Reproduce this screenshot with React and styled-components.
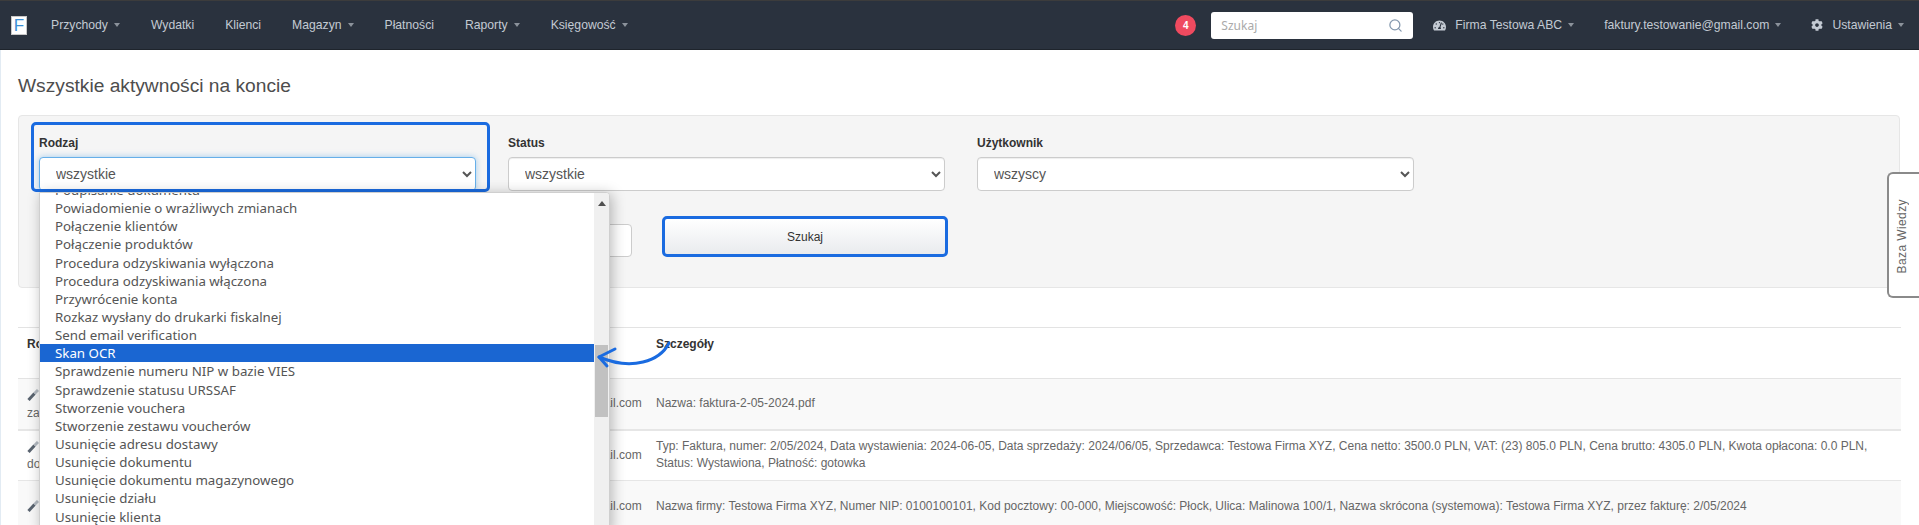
import React from 'react';
import styled, { createGlobalStyle } from 'styled-components';
import { FaCog, FaTachometerAlt } from 'react-icons/fa';
import { Search } from 'lucide-react';

const GlobalStyle = createGlobalStyle`
html, body {
  margin: 0;
  height: 525px;
  overflow: hidden;
  background: #fff;
  font-family: "Liberation Sans", Arial, sans-serif;
  font-size: 12px;
  color: #666;
}
* { box-sizing: border-box; }
`
const Page = styled.div`
position: relative;
height: 525px;
overflow: hidden;
`
const Navbar = styled.nav`
display: flex;
align-items: center;
height: 50px;
padding: 0 15px 0 11px;
background: #2a323e;
border-top: 1px solid #3c3c3c;
border-bottom: 1px solid #1e242c;
`
const Logo = styled.div`
width: 16px;
height: 19px;
margin-right: 24px;
background: #fff;
border: 1px solid #c9c9c9;
color: #3b8fd6;
font-size: 17px;
line-height: 17px;
text-align: center;
`
const NavList = styled.div`
display: flex;
align-items: center;
gap: ${p => p.$gap}px;
`
const NavItem = styled.div`
display: flex;
align-items: center;
gap: 6px;
font-size: 12.2px;
color: #c3cad3;
white-space: nowrap;
svg { margin-right: 3px; }
`
const Caret = styled.span`
width: 0;
height: 0;
border-left: 3.5px solid transparent;
border-right: 3.5px solid transparent;
border-top: 4px solid #8b929b;
`
const NavRight = styled.div`
display: flex;
align-items: center;
margin-left: auto;
`
const Badge = styled.div`
width: 21px;
height: 21px;
margin-right: 15px;
border-radius: 50%;
background: #ef4a5f;
color: #fff;
font-size: 10px;
font-weight: bold;
line-height: 21px;
text-align: center;
`
const SearchBox = styled.div`
display: flex;
align-items: center;
width: 202px;
height: 27px;
margin-right: 20px;
padding: 0 10px;
background: #fff;
border-radius: 3px;
color: #8397ad;
`
const SearchInput = styled.input`
flex: 1;
min-width: 0;
padding: 0;
border: 0;
outline: 0;
background: none;
font-family: "Noto Sans", sans-serif;
font-size: 12px;
&::placeholder { color: #aaa; }
`
const Content = styled.main`
height: 475px;
padding: 25px 19px 0 17px;
border-left: 1px solid #e2ebf3;
`
const Title = styled.h1`
margin: 0 0 18px;
font-size: 19.2px;
font-weight: normal;
line-height: 22px;
color: #4d4d4d;
`
const FilterPanel = styled.section`
height: 173px;
padding: 19px 20px 30px;
background: #f5f5f5;
border: 1px solid #e6e6e6;
border-radius: 4px;
`
const FilterRow = styled.div`
display: grid;
grid-template-columns: 437px 437px 437px;
gap: 32px;
`
const Field = styled.div`
position: relative;
`
const Label = styled.label`
display: block;
margin-bottom: 5px;
font-size: 12px;
font-weight: bold;
line-height: 17px;
color: #333;
`
const Select = styled.select`
display: block;
width: 100%;
height: 34px;
padding: 6px 12px;
background-color: #fff;
border: 1px solid ${p => (p.$focused ? '#66afe9' : '#ccc')};
border-radius: 4px;
box-shadow: ${p => (p.$focused ? '0 0 6px rgba(102, 175, 233, .6)' : 'inset 0 1px 1px rgba(0, 0, 0, .07)')};
font-family: "Liberation Sans", sans-serif;
font-size: 14px;
color: #555;
`
const Highlight = styled.div`
position: absolute;
top: -13px;
left: -8px;
width: 459px;
height: 70px;
border: 3px solid #1a6be0;
border-radius: 5px;
`
const SearchRow = styled.div`
display: flex;
align-items: flex-end;
gap: 30px;
margin-top: 25px;
`
const DateInput = styled.div`
width: 593px;
height: 33px;
background: #fff;
border: 1px solid #ccc;
border-radius: 4px;
`
const SearchButton = styled.button`
width: 286px;
height: 41px;
background: linear-gradient(#fff, #e9ebee);
border: 3px solid #1a6be0;
border-radius: 5px;
font-family: "Liberation Sans", sans-serif;
font-size: 12px;
color: #333;
`
const Table = styled.table`
width: 1883px;
margin-top: 39px;
border-collapse: collapse;
table-layout: fixed;
`
const HeadCell = styled.th`
height: 51px;
padding: 8px 8px 0 9px;
border-top: 1px solid #e3e3e3;
border-bottom: 1px solid #e3e3e3;
vertical-align: top;
text-align: left;
font-size: 12px;
line-height: 17px;
color: #333;
`
const Row = styled.tr`
background: ${p => (p.$striped ? '#f9f9f9' : '#fff')};
`
const Cell = styled.td`
height: 51px;
padding: 0 8px 0 9px;
border-bottom: ${p => p.$thick ? 2 : 1}px solid #e6e6e6;
vertical-align: middle;
text-align: ${p => p.$align || 'left'};
line-height: 17px;
color: #666;
`
const KindIcon = styled.div`
display: flex;
align-items: center;
height: 19px;
`
const Dropdown = styled.div`
position: absolute;
top: calc(100% + 1px);
left: 0;
z-index: 5;
display: flex;
width: 571px;
height: 340px;
overflow: hidden;
background: #fff;
border: 1px solid #cfcfcf;
border-radius: 0 4px 0 0;
box-shadow: 2px 2px 14px rgba(0, 0, 0, .28);
`
const OptionList = styled.div`
flex: 1;
margin-top: -12px;
`
const Option = styled.div`
height: 18.15px;
padding-left: 15px;
background: ${p => (p.$active ? '#1a66d2' : 'transparent')};
color: ${p => (p.$active ? '#fff' : '#555')};
font-family: "Noto Sans", sans-serif;
font-size: 13.3px;
line-height: 18.15px;
white-space: nowrap;
`
const Scrollbar = styled.div`
display: flex;
flex-direction: column;
align-items: center;
width: 15px;
padding-top: 8px;
background: #f0f0f0;
`
const ScrollArrow = styled.span`
width: 0;
height: 0;
border-left: 4px solid transparent;
border-right: 4px solid transparent;
border-bottom: 5px solid #505050;
`
const ScrollThumb = styled.div`
width: 13px;
height: 72px;
margin-top: 139px;
background: #c1c1c1;
`
const ArrowSvg = styled.svg`
position: absolute;
top: 335px;
left: 590px;
z-index: 6;
`
const KnowledgeTab = styled.div`
position: fixed;
top: 172px;
right: 0;
z-index: 7;
display: flex;
align-items: center;
justify-content: center;
width: 32px;
height: 126px;
background: #fff;
border: 2px solid #8a8a8a;
border-right: 0;
border-radius: 6px 0 0 6px;
font-size: 12px;
letter-spacing: .4px;
color: #666;
`
const KnowledgeText = styled.span`
margin-top: 2px;
margin-right: 4px;
writing-mode: vertical-rl;
transform: rotate(180deg);
`

const menuLeft = [
  { label: 'Przychody', caret: true },
  { label: 'Wydatki' },
  { label: 'Klienci' },
  { label: 'Magazyn', caret: true },
  { label: 'Płatności' },
  { label: 'Raporty', caret: true },
  { label: 'Księgowość', caret: true },
];

const options = [
  'Podpisanie dokumentu',
  'Powiadomienie o wrażliwych zmianach',
  'Połączenie klientów',
  'Połączenie produktów',
  'Procedura odzyskiwania wyłączona',
  'Procedura odzyskiwania włączona',
  'Przywrócenie konta',
  'Rozkaz wysłany do drukarki fiskalnej',
  'Send email verification',
  'Skan OCR',
  'Sprawdzenie numeru NIP w bazie VIES',
  'Sprawdzenie statusu URSSAF',
  'Stworzenie vouchera',
  'Stworzenie zestawu voucherów',
  'Usunięcie adresu dostawy',
  'Usunięcie dokumentu',
  'Usunięcie dokumentu magazynowego',
  'Usunięcie działu',
  'Usunięcie klienta',
];

const rows = [
  { kind: 'zapisanie', text: 'Nazwa: faktura-2-05-2024.pdf', striped: true, thick: true },
  {
    kind: 'dodanie',
    text: 'Typ: Faktura, numer: 2/05/2024, Data wystawienia: 2024-06-05, Data sprzedaży: 2024/06/05, Sprzedawca: Testowa Firma XYZ, Cena netto: 3500.0 PLN, VAT: (23) 805.0 PLN, Cena brutto: 4305.0 PLN, Kwota opłacona: 0.0 PLN, Status: Wystawiona, Płatność: gotowka',
  },
  {
    text: 'Nazwa firmy: Testowa Firma XYZ, Numer NIP: 0100100101, Kod pocztowy: 00-000, Miejscowość: Płock, Ulica: Malinowa 100/1, Nazwa skrócona (systemowa): Testowa Firma XYZ, przez fakturę: 2/05/2024',
    striped: true,
  },
];

function WandIcon() {
  return (
    <svg width="12" height="12" viewBox="0 0 12 12" fill="none" strokeWidth="3">
      <path d="M1.5 11 L7.5 4.5" stroke="#5a6470" />
      <path d="M7.5 4.5 L11 1" stroke="#b4bbc2" />
    </svg>
  );
}

export default function App() {
  return (
    <Page>
      <GlobalStyle />
      <Navbar>
        <Logo>F</Logo>
        <NavList $gap={31}>
          {menuLeft.map(item => (
            <NavItem key={item.label}>
              {item.label}
              {item.caret && <Caret />}
            </NavItem>
          ))}
        </NavList>
        <NavRight>
          <Badge>4</Badge>
          <SearchBox>
            <SearchInput placeholder="Szukaj" />
            <Search size={15} />
          </SearchBox>
          <NavList $gap={30}>
            <NavItem><FaTachometerAlt size={13} />Firma Testowa ABC<Caret /></NavItem>
            <NavItem>faktury.testowanie@gmail.com<Caret /></NavItem>
            <NavItem><FaCog size={12} />Ustawienia<Caret /></NavItem>
          </NavList>
        </NavRight>
      </Navbar>
      <Content>
        <Title>Wszystkie aktywności na koncie</Title>
        <FilterPanel>
          <FilterRow>
            <Field>
              <Highlight />
              <Label>Rodzaj</Label>
              <Select $focused><option>wszystkie</option></Select>
              <Dropdown>
                <OptionList>
                  {options.map(option => (
                    <Option key={option} $active={option === 'Skan OCR'}>{option}</Option>
                  ))}
                </OptionList>
                <Scrollbar>
                  <ScrollArrow />
                  <ScrollThumb />
                </Scrollbar>
              </Dropdown>
            </Field>
            <Field>
              <Label>Status</Label>
              <Select><option>wszystkie</option></Select>
            </Field>
            <Field>
              <Label>Użytkownik</Label>
              <Select><option>wszyscy</option></Select>
            </Field>
          </FilterRow>
          <SearchRow>
            <DateInput />
            <SearchButton>Szukaj</SearchButton>
          </SearchRow>
        </FilterPanel>
        <Table>
          <colgroup>
            <col style={{ width: 452 }} />
            <col style={{ width: 177 }} />
            <col />
          </colgroup>
          <thead>
            <tr>
              <HeadCell>Rodzaj</HeadCell>
              <HeadCell>Użytkownik</HeadCell>
              <HeadCell>Szczegóły</HeadCell>
            </tr>
          </thead>
          <tbody>
            {rows.map(row => (
              <Row key={row.text} $striped={row.striped}>
                <Cell $thick={row.thick}>
                  <KindIcon><WandIcon /></KindIcon>
                  {row.kind}
                </Cell>
                <Cell $thick={row.thick} $align="right">faktury.testowanie@gmail.com</Cell>
                <Cell $thick={row.thick}>{row.text}</Cell>
              </Row>
            ))}
          </tbody>
        </Table>
      </Content>
      <ArrowSvg width="90" height="40" viewBox="590 335 90 40" fill="none" stroke="#1a6be0" strokeWidth="3" strokeLinecap="round" strokeLinejoin="round">
        <path d="M669 343 C660 361 632 371 599 357" />
        <path d="M615 349 L599 357 L607 366" />
      </ArrowSvg>
      <KnowledgeTab><KnowledgeText>Baza Wiedzy</KnowledgeText></KnowledgeTab>
    </Page>
  );
}
